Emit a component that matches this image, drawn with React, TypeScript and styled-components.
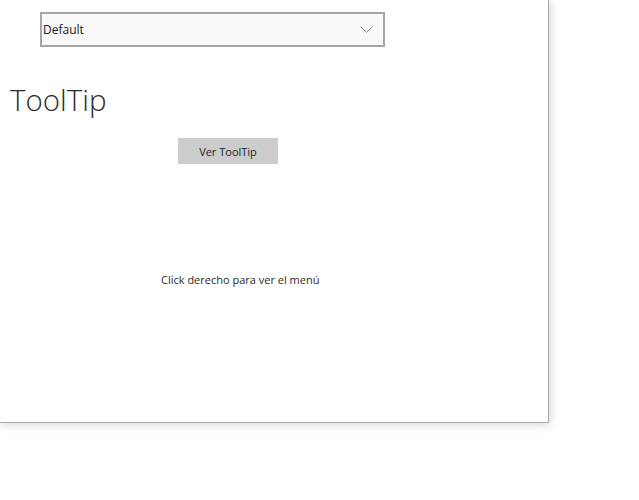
import React from "react";
import styled, { createGlobalStyle } from "styled-components";

const Global = createGlobalStyle`
  html, body { margin: 0; padding: 0; background: #ffffff; }
  body { font-family: "Open Sans", "Noto Sans", sans-serif; color: #1f1f1f; }
`;

const Page = styled.div`
  width: 639px;
  height: 500px;
  overflow: hidden;
  background: #ffffff;
`;

const Window = styled.div`
  width: 549px;
  height: 423px;
  box-sizing: border-box;
  background: #ffffff;
  border-right: 1px solid #a9a9a9;
  border-bottom: 1px solid #a9a9a9;
  box-shadow: 1px 1px 10px rgba(0, 0, 0, 0.18);
  display: flex;
  flex-direction: column;
`;

const Select = styled.div`
  margin: 12px 0 0 40px;
  width: 345px;
  height: 35px;
  box-sizing: border-box;
  border: 2px solid #a6a6a6;
  background: #f9f9f9;
  display: flex;
  align-items: center;
  justify-content: space-between;
  padding: 0 10px 0 1px;
  font-size: 12px;
  color: #1a1a1a;
`;

const Title = styled.h1`
  margin: 33px 0 0 10px;
  font-size: 29.5px;
  font-weight: 300;
  line-height: 40px;
  color: #2b2b2b;
`;

const Button = styled.button`
  margin: 18px 0 0 178px;
  width: 100px;
  height: 26px;
  border: none;
  background: #cccccc;
  font-family: "Open Sans", "Noto Sans", sans-serif;
  font-size: 11px;
  color: #1f1f1f;
  padding: 0;
`;

const Hint = styled.p`
  margin: 108px 0 0 161px;
  font-size: 11px;
  line-height: 16px;
  color: #2b2b2b;
`;

export default function App() {
  return (
    <Page>
      <Global />
      <Window>
        <Select>
          <span>Default</span>
          <svg width="13" height="8" viewBox="0 0 13 8">
            <path d="M0.5 0.5 L6.5 6.5 L12.5 0.5" fill="none" stroke="#8a8a8a" strokeWidth="1" />
          </svg>
        </Select>
        <Title>ToolTip</Title>
        <Button>Ver ToolTip</Button>
        <Hint>Click derecho para ver el menú</Hint>
      </Window>
    </Page>
  );
}
